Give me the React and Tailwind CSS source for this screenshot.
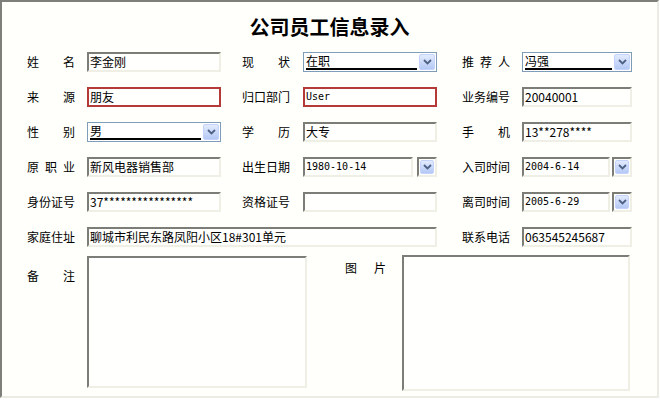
import React from "react";

const font = { fontFamily: '"Noto Sans CJK SC", "Noto Sans", sans-serif' };

const Chevron = () => (
  <svg width="9" height="6" viewBox="0 0 9 6">
    <path d="M1 1 L4.5 4.5 L8 1" fill="none" stroke="#4d6185" strokeWidth="1.8" />
  </svg>
);

const DropBtn = ({ className = "" }) => (
  <div
    className={`flex items-center justify-center rounded-[2px] border border-[#c3d3fd] bg-gradient-to-b from-[#e3ebfd] to-[#b4c8f4] ${className}`}
  >
    <Chevron />
  </div>
);

const Label = ({ chars, w = "w-[48px]", className = "" }) => (
  <div className={`flex ${w} justify-between text-[12px] leading-[20px] ${className}`}>
    {chars.split("").map((c, i) => (
      <span key={i}>{c}</span>
    ))}
  </div>
);

const sunken =
  "border-2 border-t-[#7d7d78] border-l-[#7d7d78] border-r-[#f0efe6] border-b-[#f0efe6] bg-[#fffffd]";

const TextBox = ({ value = "", w }) => (
  <div
    className={`${sunken} h-[20px] overflow-hidden px-[1px] text-[12px] leading-[15px] whitespace-nowrap ${w}`}
  >
    {value}
  </div>
);

const RedBox = ({ value, w, mono }) => (
  <div
    className={`h-[20px] border-2 border-[#b43a3a] bg-[#fffffd] px-[1px] ${w} ${
      mono
        ? "font-['DejaVu_Sans_Mono'] text-[10px] leading-[16px]"
        : "text-[12px] leading-[15px]"
    }`}
  >
    {value}
  </div>
);

const Combo = ({ value, w }) => (
  <div className={`flex h-[20px] border border-[#7f9db9] bg-white p-[1px] ${w}`}>
    <div className="flex flex-1 flex-col pl-[1px] pr-[2px]">
      <span className="text-[12px] leading-[14px]">{value}</span>
      <div className="h-[2px] bg-black" />
    </div>
    <DropBtn className="w-[16px]" />
  </div>
);

const DateBox = ({ value, w, gap }) => (
  <div className={`flex h-[20px] ${w}`}>
    <div
      className={`${sunken} flex-1 px-[1px] font-['DejaVu_Sans_Mono'] text-[10px] leading-[15px]`}
    >
      {value}
    </div>
    <div className={`${sunken} ${gap} flex w-[20px] p-[1px]`}>
      <DropBtn className="flex-1" />
    </div>
  </div>
);

const Row = ({ children }) => (
  <div className="flex h-[20px] items-center">{children}</div>
);

export default function App() {
  return (
    <div className="w-[660px] h-[400px] bg-white" style={font}>
      <div className="h-[398px] w-[659px] border-2 border-t-[#7f7f7a] border-l-[#7f7f7a] border-r-[#ecebe4] border-b-[#ecebe4] bg-[#fffffb] text-black">
        <div className="pt-[12px] h-[50px] text-center text-[20px] font-bold leading-[26px]">
          公司员工信息录入
        </div>

        <div className="flex flex-col gap-[15px] pl-[25px]">
          <Row>
            <Label chars="姓名" className="mr-[12px]" />
            <TextBox value="李金刚" w="w-[134px]" />
            <Label chars="现状" className="ml-[21px] mr-[13px]" />
            <Combo value="在职" w="w-[134px]" />
            <Label chars="推荐人" className="ml-[25px] mr-[12px]" />
            <Combo value="冯强" w="w-[110px]" />
          </Row>
          <Row>
            <Label chars="来源" className="mr-[12px]" />
            <RedBox value="朋友" w="w-[134px]" />
            <Label chars="归口部门" className="ml-[21px] mr-[13px]" />
            <RedBox value="User" w="w-[134px]" mono />
            <Label chars="业务编号" className="ml-[25px] mr-[12px]" />
            <TextBox value="20040001" w="w-[110px]" />
          </Row>
          <Row>
            <Label chars="性别" className="mr-[12px]" />
            <Combo value="男" w="w-[134px]" />
            <Label chars="学历" className="ml-[21px] mr-[13px]" />
            <TextBox value="大专" w="w-[134px]" />
            <Label chars="手机" className="ml-[25px] mr-[12px]" />
            <TextBox value="13**278****" w="w-[110px]" />
          </Row>
          <Row>
            <Label chars="原职业" className="mr-[12px]" />
            <TextBox value="新风电器销售部" w="w-[134px]" />
            <Label chars="出生日期" className="ml-[21px] mr-[13px]" />
            <DateBox value="1980-10-14" w="w-[134px]" gap="ml-[4px]" />
            <Label chars="入司时间" className="ml-[25px] mr-[12px]" />
            <DateBox value="2004-6-14" w="w-[110px]" gap="ml-[2px]" />
          </Row>
          <Row>
            <Label chars="身份证号" className="mr-[12px]" />
            <TextBox value="37****************" w="w-[134px]" />
            <Label chars="资格证号" className="ml-[21px] mr-[13px]" />
            <TextBox value="" w="w-[134px]" />
            <Label chars="离司时间" className="ml-[25px] mr-[12px]" />
            <DateBox value="2005-6-29" w="w-[110px]" gap="ml-[2px]" />
          </Row>
          <Row>
            <Label chars="家庭住址" className="mr-[12px]" />
            <TextBox value="聊城市利民东路凤阳小区18#301单元" w="w-[350px]" />
            <Label chars="联系电话" className="ml-[25px] mr-[12px]" />
            <TextBox value="063545245687" w="w-[110px]" />
          </Row>
        </div>

        <div className="mt-[9px] flex pl-[25px]">
          <Label chars="备注" className="mr-[12px] mt-[10px] h-[20px]" />
          <div className={`${sunken} h-[132px] w-[220px]`} />
          <Label chars="图片" w="w-[41px]" className="ml-[38px] mr-[16px] mt-[2px] h-[20px]" />
          <div className={`${sunken} -mt-[1px] h-[136px] w-[228px]`} />
        </div>
      </div>
    </div>
  );
}
